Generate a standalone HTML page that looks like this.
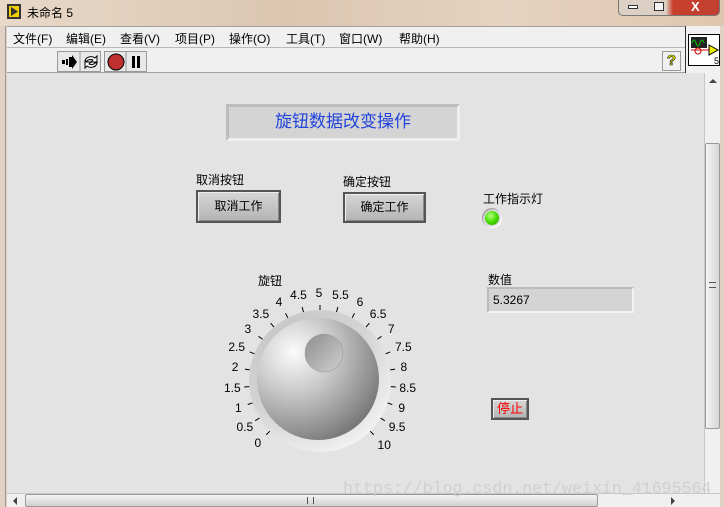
<!DOCTYPE html>
<html><head><meta charset="utf-8"><style>
*{margin:0;padding:0;box-sizing:border-box}
body{width:724px;height:507px;overflow:hidden;position:relative;background:#e2d2c4;font-family:"Liberation Sans","Noto Sans CJK SC",sans-serif;font-size:12px;color:#000}
.abs{position:absolute}
#title{left:0;top:0;width:724px;height:26px;background:linear-gradient(90deg,#e8d8c8,#dcc6b0 40%,#e6d2c0 70%,#e0c6ae)}
#menu{left:7px;top:26px;width:678px;height:21px;background:#f0f0f0;border-top:1px solid #a0a0a0}
#menu span{position:absolute;top:3px;font-size:12px}
#tool{left:7px;top:47px;width:678px;height:26px;background:#f0f0f0;border-top:1px solid #b8b8b8;border-bottom:1px solid #a0a0a0}
#icon{left:685px;top:26px;width:35px;height:47px;background:#f0f0f0;border-left:1px solid #333}
#content{left:7px;top:73px;width:697px;height:420px;background:#e3e3e3}
#vs{left:704px;top:73px;width:16px;height:420px;background:#f0f0f0;border-left:1px solid #c8c8c8}
#hs{left:7px;top:493px;width:713px;height:14px;background:#f0f0f0;border-top:1px solid #c8c8c8}
.btn{position:absolute;background:linear-gradient(#d6d6d6,#b4b4b4);border:2px solid #555;box-shadow:inset 1px 1px 0 #eee,inset -1px -1px 0 #888;text-align:center;font-size:12px}
</style></head><body>
<div id="title" class="abs"></div>
<div class="abs" style="left:5px;top:26px;width:1px;height:481px;background:#999"></div>
<svg class="abs" style="left:6px;top:3px" width="16" height="17"><rect x="1" y="1" width="14" height="15" fill="#333"/><rect x="3" y="3" width="10" height="11" fill="#f0d000"/><polygon points="5,4 12,8.5 5,13" fill="#333"/></svg>
<div class="abs" style="left:27px;top:4px;font-size:12px">未命名 5</div>
<div class="abs" style="left:618px;top:0;width:102px;height:16px;border:1px solid #777;border-top:none;border-radius:0 0 5px 5px;background:linear-gradient(90deg,#dcd0c4 0,#dcd0c4 47%,#c8402c 54%,#c04030)"></div>
<div class="abs" style="left:628px;top:5px;width:10px;height:4px;border:1px solid #333;background:#fff"></div>
<div class="abs" style="left:654px;top:2px;width:10px;height:9px;border:1px solid #333;background:#f4f4f4"></div>
<div class="abs" style="left:691px;top:-1px;color:#fff;font-weight:bold;font-size:13px">X</div>
<div id="menu" class="abs">
<span style="left:6px">文件(F)</span><span style="left:59px">编辑(E)</span><span style="left:113px">查看(V)</span><span style="left:168px">项目(P)</span><span style="left:222px">操作(O)</span><span style="left:279px">工具(T)</span><span style="left:332px">窗口(W)</span><span style="left:392px">帮助(H)</span>
</div>
<div id="tool" class="abs">
<div class="abs" style="left:50px;top:3px;width:44px;height:21px;border:1px solid #999;background:#e8e8e8"></div>
<svg class="abs" style="left:51px;top:4px" width="44" height="20"><path d="M4 8h3v4H4zM8 7h2v6H8zM11 5h3V3l5 7-5 7v-2h-3z" fill="#000"/><line x1="22" y1="0" x2="22" y2="20" stroke="#999"/><path d="M27 9a6 5 0 0 1 10-3l2-2v6h-6l2-2a4 3 0 0 0-6 1zM39 11a6 5 0 0 1-10 3l-2 2v-6h6l-2 2a4 3 0 0 0 6-1z" fill="#fff" stroke="#000"/></svg>
<div class="abs" style="left:97px;top:3px;width:43px;height:21px;border:1px solid #999;background:#e8e8e8"></div>
<svg class="abs" style="left:98px;top:4px" width="42" height="20"><circle cx="11" cy="10" r="8" fill="#c03030" stroke="#000"/><line x1="21" y1="0" x2="21" y2="20" stroke="#999"/><rect x="27" y="4" width="3" height="12"/><rect x="32" y="4" width="3" height="12"/></svg>
<div class="abs" style="left:655px;top:3px;width:19px;height:20px;border:1px solid #999;text-align:center;font-weight:bold;font-size:15px;color:#ee0;-webkit-text-stroke:0.6px #000">?</div>
</div>
<div id="icon" class="abs">
<div class="abs" style="left:2px;top:8px;width:32px;height:32px;background:#fff;border:1px solid #000"></div>
<svg class="abs" style="left:3px;top:9px" width="31" height="31"><rect x="2" y="2" width="16" height="11" fill="#222"/><path d="M3 8q2-6 4 0t4 0 4 0" stroke="#0c0" fill="none"/><path d="M2 15h22" stroke="#c00"/><circle cx="9" cy="16" r="3" fill="none" stroke="#c00"/><polygon points="20,10 29,15 20,20" fill="#ee0" stroke="#000"/><text x="25" y="29" font-size="9" font-family="Liberation Sans">5</text></svg>
</div>
<div id="content" class="abs"></div>
<div id="vs" class="abs">
<div class="abs" style="left:4px;top:6px;width:0;height:0;border:4px solid transparent;border-bottom:4px solid #444;border-top:none"></div>
<div class="abs" style="left:0;top:70px;width:15px;height:286px;border:1px solid #999;border-radius:2px;background:linear-gradient(90deg,#f4f4f4,#d6d6d6)"></div>
<div class="abs" style="left:4px;top:209px;width:7px;height:6px;border-top:1px solid #555;border-bottom:1px solid #555"></div>
</div>
<div id="hs" class="abs">
<div class="abs" style="left:6px;top:3px;width:0;height:0;border:4px solid transparent;border-right:4px solid #444;border-left:none"></div>
<div class="abs" style="left:18px;top:0;width:573px;height:13px;border:1px solid #999;border-radius:2px;background:linear-gradient(#f4f4f4,#d0d0d0)"></div>
<div class="abs" style="left:300px;top:3px;width:7px;height:7px;border-left:1px solid #555;border-right:1px solid #555"></div>
<div class="abs" style="left:664px;top:3px;width:0;height:0;border:4px solid transparent;border-left:4px solid #444;border-right:none"></div>
</div>
<div class="abs" style="left:226px;top:104px;width:234px;height:37px;background:#d4d4d4;border:3px solid;border-color:#bcbcbc #efefef #efefef #bcbcbc;color:#2244dd;font-size:17px;text-align:center;line-height:30px">旋钮数据改变操作</div>
<div class="abs" style="left:196px;top:171px">取消按钮</div>
<div class="btn" style="left:196px;top:190px;width:85px;height:33px;line-height:28px">取消工作</div>
<div class="abs" style="left:343px;top:173px">确定按钮</div>
<div class="btn" style="left:343px;top:192px;width:83px;height:31px;line-height:26px">确定工作</div>
<div class="abs" style="left:483px;top:190px">工作指示灯</div>
<div class="abs" style="left:482px;top:208px;width:20px;height:20px;border-radius:50%;background:#d8d8d8;box-shadow:inset -1px -1px 1px #fff,inset 1px 1px 1px #999"></div>
<div class="abs" style="left:485px;top:211px;width:14px;height:14px;border-radius:50%;background:radial-gradient(circle at 40% 35%,#b8ff80,#44dd00 50%,#2a9a00)"></div>
<div class="abs" style="left:488px;top:271px">数值</div>
<div class="abs" style="left:487px;top:287px;width:147px;height:26px;background:#d4d4d4;border:2px solid;border-color:#bbb #f2f2f2 #f2f2f2 #bbb;padding:4px 0 0 4px;font-size:12px">5.3267</div>
<div class="btn" style="left:491px;top:398px;width:38px;height:22px;line-height:17px;color:#f00;font-size:13px">停止</div>
<div class="abs" style="left:258px;top:272px">旋钮</div>
<svg class="abs" style="left:0;top:0" width="724" height="507" font-family="Liberation Sans" font-size="12" text-anchor="middle">
<defs>
<radialGradient id="bz" cx="0.35" cy="0.3" r="0.8"><stop offset="0" stop-color="#c0c0c0"/><stop offset="0.6" stop-color="#d4d4d4"/><stop offset="1" stop-color="#f8f8f8"/></radialGradient>
<radialGradient id="ball" cx="0.3" cy="0.28" r="0.85"><stop offset="0" stop-color="#fcfcfc"/><stop offset="0.4" stop-color="#c8c8c8"/><stop offset="0.8" stop-color="#8c8c8c"/><stop offset="1" stop-color="#6a6a6a"/></radialGradient>
<linearGradient id="dim" x1="0" y1="0" x2="1" y2="1"><stop offset="0" stop-color="#8e8e8e"/><stop offset="1" stop-color="#cfcfcf"/></linearGradient>
</defs>
<circle cx="320" cy="381" r="71" fill="url(#bz)"/>
<circle cx="318" cy="379" r="61" fill="url(#ball)"/>
<circle cx="324" cy="353" r="19" fill="url(#dim)" stroke="#9a9a9a" stroke-width="0.6"/>
<g stroke="#000" stroke-width="1">
<line x1="320" y1="305" x2="320" y2="310" transform="rotate(-135 320 381)"/>
<line x1="320" y1="305" x2="320" y2="310" transform="rotate(-121.5 320 381)"/>
<line x1="320" y1="305" x2="320" y2="310" transform="rotate(-108 320 381)"/>
<line x1="320" y1="305" x2="320" y2="310" transform="rotate(-94.5 320 381)"/>
<line x1="320" y1="305" x2="320" y2="310" transform="rotate(-81 320 381)"/>
<line x1="320" y1="305" x2="320" y2="310" transform="rotate(-67.5 320 381)"/>
<line x1="320" y1="305" x2="320" y2="310" transform="rotate(-54 320 381)"/>
<line x1="320" y1="305" x2="320" y2="310" transform="rotate(-40.5 320 381)"/>
<line x1="320" y1="305" x2="320" y2="310" transform="rotate(-27 320 381)"/>
<line x1="320" y1="305" x2="320" y2="310" transform="rotate(-13.5 320 381)"/>
<line x1="320" y1="305" x2="320" y2="310"/>
<line x1="320" y1="305" x2="320" y2="310" transform="rotate(13.5 320 381)"/>
<line x1="320" y1="305" x2="320" y2="310" transform="rotate(27 320 381)"/>
<line x1="320" y1="305" x2="320" y2="310" transform="rotate(40.5 320 381)"/>
<line x1="320" y1="305" x2="320" y2="310" transform="rotate(54 320 381)"/>
<line x1="320" y1="305" x2="320" y2="310" transform="rotate(67.5 320 381)"/>
<line x1="320" y1="305" x2="320" y2="310" transform="rotate(81 320 381)"/>
<line x1="320" y1="305" x2="320" y2="310" transform="rotate(94.5 320 381)"/>
<line x1="320" y1="305" x2="320" y2="310" transform="rotate(108 320 381)"/>
<line x1="320" y1="305" x2="320" y2="310" transform="rotate(121.5 320 381)"/>
<line x1="320" y1="305" x2="320" y2="310" transform="rotate(135 320 381)"/>
</g>
<text x="257.8" y="447">0</text><text x="244.9" y="431">0.5</text><text x="238.3" y="412">1</text><text x="232.3" y="392">1.5</text><text x="235.1" y="371">2</text><text x="236.7" y="351">2.5</text><text x="247.8" y="333">3</text><text x="260.9" y="318">3.5</text><text x="279" y="306">4</text><text x="298.5" y="299">4.5</text><text x="319" y="297">5</text><text x="340.5" y="299">5.5</text><text x="360" y="306">6</text><text x="378.1" y="318">6.5</text><text x="391.2" y="333">7</text><text x="403.3" y="351">7.5</text><text x="403.9" y="371">8</text><text x="407.7" y="392">8.5</text><text x="401.7" y="412">9</text><text x="397.1" y="431">9.5</text><text x="384.2" y="449">10</text>
<text x="343" y="493" text-anchor="start" font-family="Liberation Mono" font-size="16.6" fill="#cfcfcf" opacity="0.9">https://blog.csdn.net/weixin_41695564</text>
</svg>
</body></html>
